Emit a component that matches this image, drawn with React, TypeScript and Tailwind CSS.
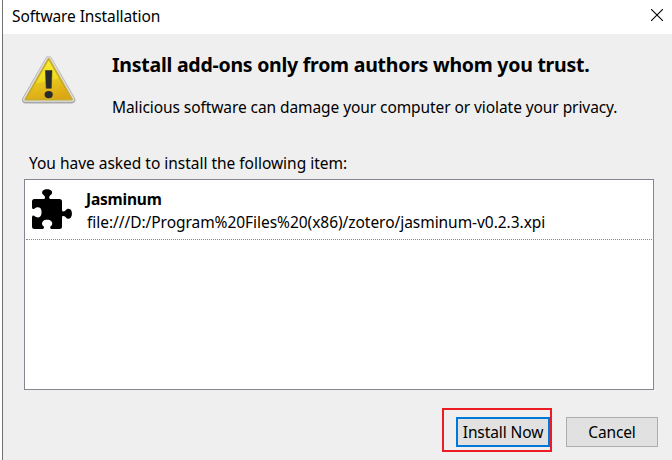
function WarningIcon() {
  return (
    <svg className="block h-[52px] w-[56px]" viewBox="0 0 56 52">
      <defs>
        <linearGradient id="rim" x1="0" y1="0" x2="0" y2="1">
          <stop offset="0" stopColor="#c4c4c4" />
          <stop offset="1" stopColor="#a9a9a9" />
        </linearGradient>
        <linearGradient id="face" x1="0.4" y1="0" x2="0.65" y2="1">
          <stop offset="0" stopColor="#f8ee35" />
          <stop offset="0.5" stopColor="#f0da20" />
          <stop offset="0.54" stopColor="#e6c41b" />
          <stop offset="1" stopColor="#dda514" />
        </linearGradient>
      </defs>
      <path d="M27.7 5.5 L50.8 45.8 H4.6 Z" fill="url(#rim)" stroke="url(#rim)" strokeWidth="7.2" strokeLinejoin="round" />
      <path d="M27.7 5.5 L50.8 45.2 H4.6 Z" fill="#dedede" stroke="#dedede" strokeWidth="5.2" strokeLinejoin="round" />
      <path d="M27.7 4.8 L51 45.4 H4.4 Z" fill="url(#face)" stroke="#c7ab2a" strokeWidth="2" strokeLinejoin="round" />
      <path d="M27.7 6.6 L49.3 44.6 H6.1 Z" fill="url(#face)" />
      <path d="M24.4 16.5 H31 L30.3 34.3 H25.2 Z" fill="#262b2d" stroke="#262b2d" strokeWidth="0.5" strokeLinejoin="round" />
      <ellipse cx="27.7" cy="40.6" rx="4.1" ry="3.6" fill="#262b2d" />
    </svg>
  );
}

function PuzzleIcon() {
  return (
    <svg className="block h-10 w-10" viewBox="0 0 40 40">
      <path
        d="M2.5 10 H12 C13.3 9.5 13.3 7.8 12.2 6.6 C9.6 5 9.6 2.8 11 1.4 C13 -0.2 17.2 -0.2 19.2 1.4 C20.6 2.8 20.6 5 18 6.6 C16.9 7.8 16.9 9.5 18.2 10 H27.5 Q30 10 30 12.5 V21 C30 22.8 32 22.8 33.3 21.8 C35 19.4 37 19.3 38.5 20.6 C40.4 22.5 40.4 27 38.5 28.9 C37 30.2 35 30.1 33.3 27.7 C32 26.7 30 26.7 30 28.5 V37.5 Q30 40 27.5 40 H20 C18.2 40 17.7 38.5 18.6 37.2 C20.7 35.8 20.6 33.4 19.3 32.2 C17.3 30.4 12.7 30.4 11 32.2 C9.6 33.4 9.6 35.8 11.6 37.2 C12.5 38.5 12 40 10 40 H2.5 Q0 40 0 37.5 V28.5 C0 26.4 1.4 26 2.6 27 C4.5 28.9 7 28.8 8.2 27.5 C10 25.6 10 20.8 8.2 19 C7 17.8 4.5 17.7 2.6 19.6 C1.4 20.6 0 20.2 0 18 V12.5 Q0 10 2.5 10 Z"
        fill="#000"
      />
    </svg>
  );
}

export default function App() {
  return (
    <main className="flex h-[460px] w-[672px] bg-white pl-[2px] font-['Noto_Sans','Open_Sans',sans-serif] text-[15.5px] leading-6 text-black">
      <section className="flex min-w-0 flex-1 flex-col border-l border-[#707070] bg-[#efefef]">
        <header className="flex h-[34px] shrink-0 justify-between bg-white pl-[9px] pr-[9px]">
          <h1 className="mt-[4px] whitespace-nowrap tracking-[-0.1px]">Software Installation</h1>
          <svg className="mt-[9px] h-3 w-3" viewBox="0 0 12 12" aria-label="Close">
            <path d="M0 0 L12 12 M12 0 L0 12" stroke="#000" strokeWidth="1.1" />
          </svg>
        </header>
        <div className="flex h-[117px] shrink-0 pl-[18px] pt-5">
          <WarningIcon />
          <div className="ml-[35px] whitespace-nowrap">
            <h2 className="-mt-[3px] text-[19.5px] font-bold leading-7 tracking-[-0.25px]">Install add-ons only from authors whom you trust.</h2>
            <p className="mt-[16px] tracking-[-0.08px]">Malicious software can damage your computer or violate your privacy.</p>
          </div>
        </div>
        <p className="h-7 shrink-0 whitespace-nowrap pl-[26px] tracking-[-0.02px]">You have asked to install the following item:</p>
        <div className="ml-[21px] h-[211px] w-[630px] shrink-0 border border-[#828790] bg-white px-px">
          <div className="flex h-[60px] border-b border-dotted border-[#888] pl-[6px] pt-[9px]">
            <PuzzleIcon />
            <div className="ml-[14px] -mt-[2px] whitespace-nowrap">
              <div className="h-[23px] font-bold tracking-[-0.2px]">Jasminum</div>
              <div className="pl-px tracking-[-0.045px]">file:///D:/Program%20Files%20(x86)/zotero/jasminum-v0.2.3.xpi</div>
            </div>
          </div>
        </div>
        <footer className="mt-[18px] flex pl-[439px]">
          <div className="h-11 w-[110px] shrink-0 border-2 border-[#ed1c24] pl-[12px] pt-[7px]">
            <button className="block h-[30px] w-[94px] whitespace-nowrap border-2 border-[#0078d7] bg-[#e1e1e1] tracking-[-0.1px]">Install Now</button>
          </div>
          <button className="ml-[14px] mt-[9px] h-[30px] w-[92px] shrink-0 border border-[#adadad] bg-[#e1e1e1] tracking-[-0.15px]">Cancel</button>
        </footer>
      </section>
    </main>
  );
}
